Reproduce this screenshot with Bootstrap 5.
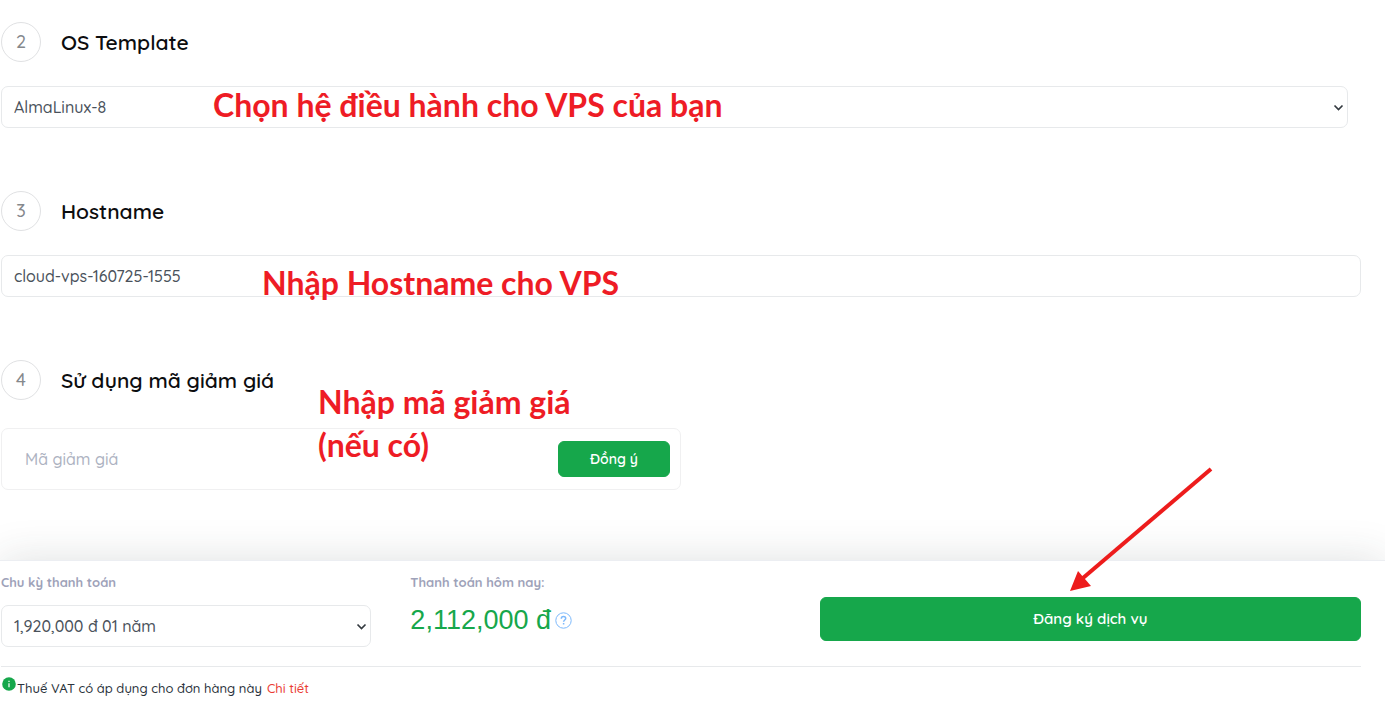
<!DOCTYPE html>
<html lang="vi">
<head>
<meta charset="utf-8">
<meta name="viewport" content="width=device-width, initial-scale=1">
<title>Đăng ký Cloud VPS</title>
<link rel="stylesheet" href="https://cdn.jsdelivr.net/npm/bootstrap@5.3.0/dist/css/bootstrap.min.css">
<style>
:root { --brand: #16a74b; --line: #e7e9eb; --note: #ee1c25; }
body { font-family: Quicksand, Lato, "Open Sans", sans-serif; font-size: 16px; line-height: 24px; color: #3a424b; background: #fff; }
.page-pad { padding-left: 1px; padding-right: 24px; }
.order-main { padding-top: 22px; }
.step { position: relative; margin-bottom: 63px; }
.step:last-child { margin-bottom: 70px; }
.step-head { display: flex; align-items: center; gap: 20px; height: 40px; margin-bottom: 24px; }
.coupon-head { margin-bottom: 28px; }
.step-no { width: 40px; height: 40px; border: 1px solid #e0e1e3; border-radius: 50%; color: #85888c; font-size: 18px; font-weight: 500; display: flex; align-items: center; justify-content: center; }
.step-title { font-size: 21px; line-height: 28px; font-weight: 600; color: #0c0d0f; margin: 0; }
.order-field { height: 42px; border: 1px solid var(--line); border-radius: 7px; padding: 0 12px; color: #4a525b; font-size: 16px; font-weight: 500; background-color: #fff; }
.order-select { background-position: right 3px center; background-size: 11px 11px; background-image: url("data:image/svg+xml,%3csvg xmlns='http://www.w3.org/2000/svg' viewBox='0 0 11 11'%3e%3cpath fill='none' stroke='%23343a40' stroke-width='1.7' d='m1.500 3.500 4 4 4-4'/%3e%3c/svg%3e"); }
.os-box { padding-right: 13px; }
.marker-note { position: absolute; color: var(--note); font-weight: 700; font-size: 32px; line-height: 43px; font-family: Lato, "Open Sans", sans-serif; white-space: nowrap; pointer-events: none; }
.note-os { left: 212px; top: 61px; }
.note-host { left: 261px; top: 70px; }
.note-code { left: 317px; top: 20px; }
.coupon { border: 1px solid #f0f0f1; border-radius: 7px; height: 62px; padding: 0 10px 0 23px; }
.coupon input { font-size: 16px; font-weight: 500; }
.coupon input::placeholder { color: #adb2c1; opacity: 1; }
.btn-brand { --bs-btn-bg: var(--brand); --bs-btn-color: #fff; --bs-btn-border-color: var(--brand); --bs-btn-hover-bg: #12903f; --bs-btn-hover-color: #fff; border-radius: 6px; font-weight: 600; }
.btn-coupon { width: 112px; height: 36px; padding: 0; font-size: 14px; }
.btn-order { height: 44px; font-size: 15px; margin-top: 36px; }
.pay-bar { position: relative; border-top: 1px solid #eceef2; box-shadow: 0 0 40px rgba(40, 55, 55, .15); background: #fff; }
.pay-grid { display: grid; grid-template-columns: 301fr 301fr 398fr; height: 105px; }
.cycle-box { padding-right: 39px; }
.pay-label { display: block; font-size: 13px; line-height: 20px; font-weight: 700; color: #9ea2b9; margin: 11px 0 13px; }
.pay-total { font-family: "Liberation Sans", Arial, sans-serif; font-size: 27px; line-height: 30px; color: var(--brand); }
.vat-row { border-top: 1px solid var(--line); height: 42px; font-size: 13px; font-weight: 500; color: #2b333c; }
.vat-row a { color: #ea3c34; text-decoration: none; margin-left: 5px; }
.arrow-note { position: absolute; right: 172px; top: -94px; pointer-events: none; }
</style>
</head>
<body>
<main class="page-pad order-main">
  <section class="step">
    <div class="step-head"><span class="step-no">2</span><h2 class="step-title"><label for="os">OS Template</label></h2></div>
    <div class="os-box"><select id="os" class="form-select order-field order-select"><option>AlmaLinux-8</option></select></div>
    <div class="marker-note note-os">Chọn hệ điều hành cho VPS của bạn</div>
  </section>
  <section class="step">
    <div class="step-head"><span class="step-no">3</span><h2 class="step-title"><label for="host">Hostname</label></h2></div>
    <input id="host" type="text" class="form-control order-field" value="cloud-vps-160725-1555">
    <div class="marker-note note-host">Nhập Hostname cho VPS</div>
  </section>
  <section class="step">
    <div class="step-head coupon-head"><span class="step-no">4</span><h2 class="step-title"><label for="code">Sử dụng mã giảm giá</label></h2></div>
    <div class="coupon w-50 d-flex align-items-center">
      <input id="code" type="text" class="form-control border-0 p-0" placeholder="Mã giảm giá">
      <button type="button" class="btn btn-brand btn-coupon flex-shrink-0">Đồng ý</button>
    </div>
    <div class="marker-note note-code">Nhập mã giảm giá<br>(nếu có)</div>
  </section>
</main>
<footer class="pay-bar page-pad">
  <div class="pay-grid">
    <div class="cycle-box">
      <label class="pay-label" for="cycle">Chu kỳ thanh toán</label>
      <select id="cycle" class="form-select order-field order-select"><option>1,920,000 đ 01 năm</option></select>
    </div>
    <div>
      <span class="pay-label">Thanh toán hôm nay:</span>
      <div class="d-flex align-items-center pay-total">2,112,000 đ
        <svg class="ms-1" width="17" height="17" viewBox="0 0 17 17" fill="none" stroke="#7db9fb"><circle cx="8.500" cy="8.500" r="7.700"/><path stroke-width="1.500" d="M6.300 6.700c0-1.500 1-2.200 2.200-2.200s2.200.8 2.200 2c0 1.500-2.100 1.600-2.100 3.300M8.600 11v1.600"/></svg>
      </div>
    </div>
    <div><button type="submit" class="btn btn-brand btn-order w-100">Đăng ký dịch vụ</button></div>
  </div>
  <div class="vat-row d-flex align-items-center">
    <svg class="mb-2" width="16" height="14" viewBox="0 0 16 14"><circle cx="8" cy="7" r="6.800" fill="#16a74b"/><path d="M8 6.200v4M8 3.700v1.300" stroke="#fff" stroke-width="1.200"/></svg>
    <span>Thuế VAT có áp dụng cho đơn hàng này</span><a href="#">Chi tiết</a>
  </div>
  <svg class="arrow-note" width="144" height="126" viewBox="0 0 144 126"><path d="M142 2 14 111" stroke="#ed1c1c" stroke-width="4"/><path d="M1 124 9 104 22 119Z" fill="#ed1c1c"/></svg>
</footer>
<script src="https://cdn.jsdelivr.net/npm/bootstrap@5.3.0/dist/js/bootstrap.bundle.min.js"></script>
</body>
</html>
